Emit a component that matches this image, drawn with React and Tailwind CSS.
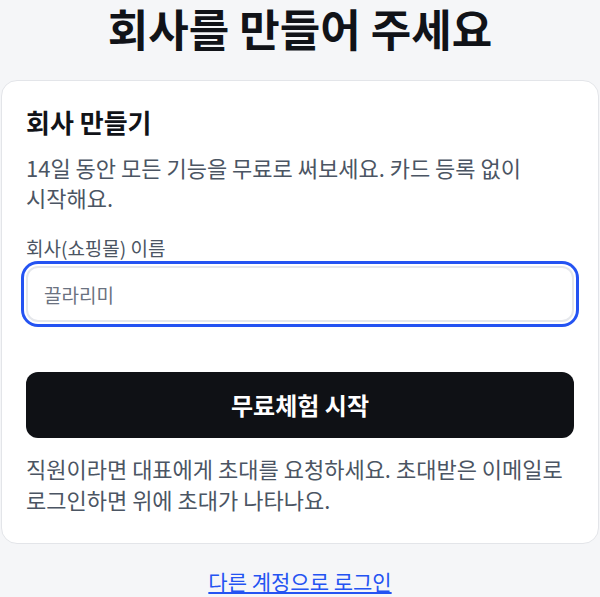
import React, { useState } from 'react';

const App = () => {
  const [company, setCompany] = useState('');

  return (
    <div className="min-h-screen bg-[#f5f6f8] font-['Noto_Sans_CJK_KR','Noto_Sans',sans-serif] break-keep">
      <h1 className="text-center text-[44px] font-bold leading-[56px] text-[#111318]">
        회사를 만들어 주세요
      </h1>

      <div className="mx-px mt-6 rounded-2xl border border-[#e3e5e9] bg-white px-6 pt-6 pb-7">
        <h2 className="text-[26px] font-semibold leading-[34px] text-[#111318]">회사 만들기</h2>
        <p className="mt-[13px] text-[22px] leading-[30px] text-[#4b5563]">
          14일 동안 모든 기능을 무료로 써보세요. 카드 등록 없이 시작해요.
        </p>

        <label className="mt-[22px] block text-[19px] leading-[27px] text-[#4b5563]">
          회사(쇼핑몰) 이름
        </label>
        <input
          value={company}
          onChange={(e) => setCompany(e.target.value)}
          placeholder="끌라리미"
          className="mt-[5px] block h-14 w-full rounded-xl border-2 border-[#e5e7eb] bg-white px-4 text-[19px] text-[#111318] outline-none ring-[3px] ring-[#2453f2] ring-offset-2 placeholder:text-[#6b7280]"
        />

        <button className="mt-[50px] flex h-[66px] w-full items-center justify-center rounded-xl bg-[#0f1115] text-[24px] font-semibold text-white">
          무료체험 시작
        </button>

        <p className="mt-[15px] text-[22px] leading-[31px] text-[#4b5563]">
          직원이라면 대표에게 초대를 요청하세요. 초대받은 이메일로 로그인하면 위에 초대가 나타나요.
        </p>
      </div>

      <div className="mt-[22px] text-center">
        <a href="#" className="text-[21px] leading-[30px] text-[#2453f2] underline underline-offset-2">
          다른 계정으로 로그인
        </a>
      </div>
    </div>
  );
};

export default App;
